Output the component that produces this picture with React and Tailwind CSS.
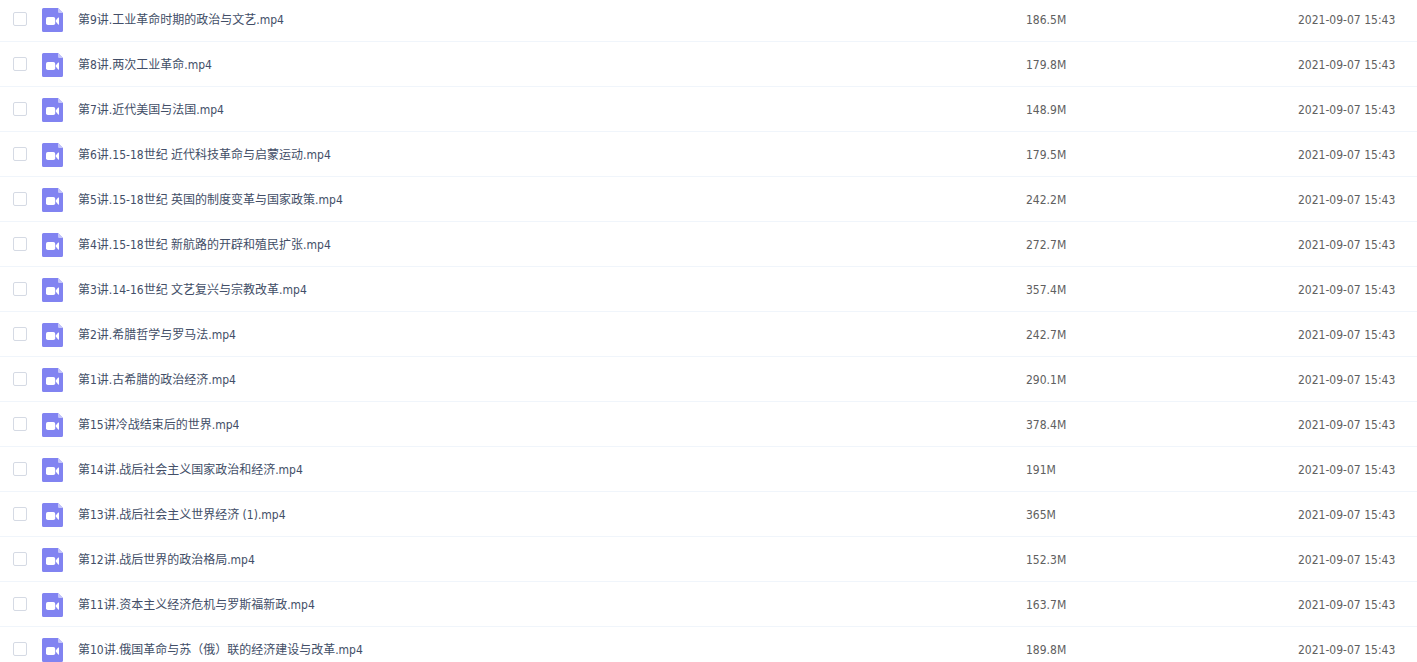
const files = [
  ["第9讲.工业革命时期的政治与文艺.mp4", "186.5M"],
  ["第8讲.两次工业革命.mp4", "179.8M"],
  ["第7讲.近代美国与法国.mp4", "148.9M"],
  ["第6讲.15-18世纪 近代科技革命与启蒙运动.mp4", "179.5M"],
  ["第5讲.15-18世纪 英国的制度变革与国家政策.mp4", "242.2M"],
  ["第4讲.15-18世纪 新航路的开辟和殖民扩张.mp4", "272.7M"],
  ["第3讲.14-16世纪 文艺复兴与宗教改革.mp4", "357.4M"],
  ["第2讲.希腊哲学与罗马法.mp4", "242.7M"],
  ["第1讲.古希腊的政治经济.mp4", "290.1M"],
  ["第15讲冷战结束后的世界.mp4", "378.4M"],
  ["第14讲.战后社会主义国家政治和经济.mp4", "191M"],
  ["第13讲.战后社会主义世界经济 (1).mp4", "365M"],
  ["第12讲.战后世界的政治格局.mp4", "152.3M"],
  ["第11讲.资本主义经济危机与罗斯福新政.mp4", "163.7M"],
  ["第10讲.俄国革命与苏（俄）联的经济建设与改革.mp4", "189.8M"],
].map(([name, size]) => ({ name, size, modified: "2021-09-07 15:43" }));

function VideoFileIcon() {
  return (
    <svg className="block h-6 w-[21px] shrink-0" viewBox="0 0 21 24" aria-hidden="true">
      <path d="M1.5 0H16L21 5V22.5A1.5 1.5 0 0 1 19.5 24H1.5A1.5 1.5 0 0 1 0 22.5V1.5A1.5 1.5 0 0 1 1.5 0Z" fill="#8183f1" />
      <path d="M16 0L21 5H17.2A1.2 1.2 0 0 1 16 3.8Z" fill="#c5c6fa" />
      <rect x="4" y="9" width="9.2" height="8" rx="1.8" fill="#fff" />
      <path d="M13.9 12.3L16.2 9.6Q17 9 17 10V16Q17 17 16.2 16.4L13.9 13.7Q13.4 13 13.9 12.3Z" fill="#fff" />
    </svg>
  );
}

function FileRow({ file, id }) {
  return (
    <tr className="h-[45px]">
      <td className="w-[42px] border-b border-[#f0f5fb] pl-[13px]">
        <input
          id={id}
          type="checkbox"
          className="block size-[14px] appearance-none rounded-xs border border-[#d5dae4] bg-white checked:border-[#8183f1] checked:bg-[#8183f1]"
        />
      </td>
      <td className="border-b border-[#f0f5fb] pt-0.5">
        <label htmlFor={id} className="flex items-center gap-[15px] text-[#424e67]">
          <VideoFileIcon />
          <span className="truncate">{file.name}</span>
        </label>
      </td>
      <td className="w-[272px] border-b border-[#f0f5fb] pt-0.5">{file.size}</td>
      <td className="w-[119px] border-b border-[#f0f5fb] pt-0.5 whitespace-nowrap">{file.modified}</td>
    </tr>
  );
}

export default function App() {
  return (
    <main className="h-screen overflow-hidden bg-white font-['DejaVu_Sans_Condensed','Noto_Sans_CJK_SC',sans-serif] text-xs text-[#606060]">
      <table className="-mt-[3px] w-full table-fixed border-separate border-spacing-0">
        <tbody>
          {files.map((file, i) => (
            <FileRow key={file.name} file={file} id={`file-${i}`} />
          ))}
        </tbody>
      </table>
    </main>
  );
}
